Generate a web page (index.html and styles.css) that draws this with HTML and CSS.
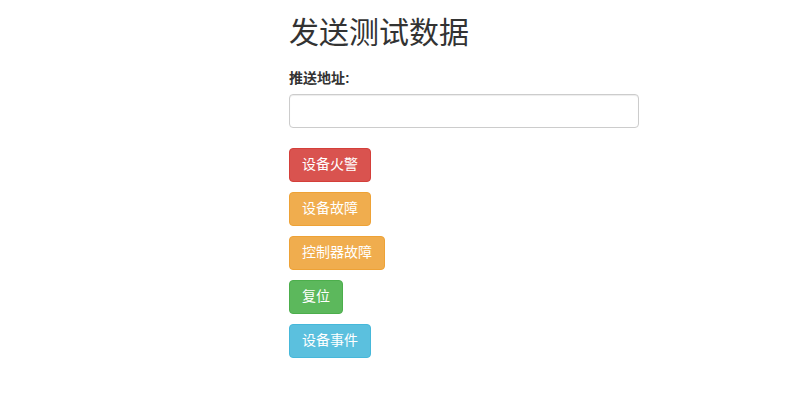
FILE: index.html
```html
<!DOCTYPE html>
<html lang="zh-CN">
<head>
<meta charset="utf-8">
<title>发送测试数据</title>
<link rel="stylesheet" href="styles.css">
</head>
<body>
<div class="page">
  <h2 class="title">发送测试数据</h2>
  <div class="form-group">
    <label class="label" for="addr">推送地址:</label>
    <input class="input" id="addr" type="text">
  </div>
  <div class="actions">
    <button class="btn btn-danger">设备火警</button>
    <button class="btn btn-warning">设备故障</button>
    <button class="btn btn-warning">控制器故障</button>
    <button class="btn btn-success">复位</button>
    <button class="btn btn-info">设备事件</button>
  </div>
</div>
</body>
</html>
```
FILE: styles.css
```css
* { box-sizing: border-box; }
html, body { margin: 0; padding: 0; background: #fff; }
body {
  font-family: "Liberation Sans", "Noto Sans CJK SC", sans-serif;
  font-size: 14px;
  line-height: 1.42857;
  color: #333;
}
.page {
  padding-left: 289px;
  width: 639px;
}
.title {
  margin: 16px 0 20px;
  font-size: 30px;
  font-weight: 400;
  line-height: 1.1;
}
.form-group {
  display: flex;
  flex-direction: column;
  margin-bottom: 20px;
}
.label {
  font-weight: 700;
  margin-bottom: 5px;
}
.input {
  height: 34px;
  width: 350px;
  border: 1px solid #ccc;
  border-radius: 4px;
  box-shadow: inset 0 1px 1px rgba(0,0,0,.075);
  padding: 6px 12px;
  font: inherit;
}
.actions {
  display: flex;
  flex-direction: column;
  align-items: flex-start;
  gap: 10px;
}
.btn {
  font-family: inherit;
  font-size: 14px;
  line-height: 1.42857;
  padding: 6px 12px;
  border: 1px solid transparent;
  border-radius: 4px;
  color: #fff;
  cursor: pointer;
}
.btn-danger { background: #d9534f; border-color: #d43f3a; }
.btn-warning { background: #f0ad4e; border-color: #eea236; }
.btn-success { background: #5cb85c; border-color: #4cae4c; }
.btn-info { background: #5bc0de; border-color: #46b8da; }
```
